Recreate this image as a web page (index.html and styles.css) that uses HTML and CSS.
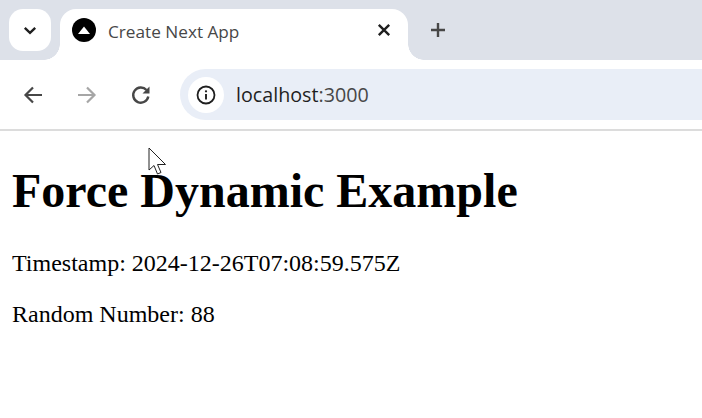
FILE: index.html
```html
<!DOCTYPE html>
<html lang="en">
<head>
<meta charset="utf-8">
<title>Create Next App</title>
<link rel="stylesheet" href="styles.css">
</head>
<body>
<header class="chrome">
  <div class="tabstrip">
    <button class="tab-search" aria-label="Search tabs">
      <svg width="14" height="9" viewBox="0 0 14 9"><path d="M1.800 1.800 7 6.800 12.200 1.800" fill="none" stroke="#1f1f1f" stroke-width="2.400"/></svg>
    </button>
    <div class="tab">
      <svg class="favicon" width="24" height="24" viewBox="0 0 24 24"><circle cx="12" cy="12" r="12" fill="#000"/><path d="M12 8.500 18 16H6Z" fill="#fff"/></svg>
      <span class="tab-title">Create Next App</span>
      <svg class="tab-close" width="14" height="14" viewBox="0 0 14 14"><path d="M1.800 1.800 12.200 12.200M12.200 1.800 1.800 12.200" fill="none" stroke="#1f1f1f" stroke-width="2.400"/></svg>
    </div>
    <svg class="new-tab" width="16" height="16" viewBox="0 0 16 16"><path d="M8 1V15M1 8H15" fill="none" stroke="#474747" stroke-width="2.400"/></svg>
  </div>
  <div class="toolbar">
    <svg class="nav" width="22" height="22" viewBox="0 0 22 22"><path d="M20 11H3.500M11 3.500 3.500 11 11 18.500" fill="none" stroke="#474747" stroke-width="2.200"/></svg>
    <svg class="nav" width="22" height="22" viewBox="0 0 22 22"><path d="M2 11H18.500M11 3.500 18.500 11 11 18.500" fill="none" stroke="#a6a6a6" stroke-width="2.200"/></svg>
    <svg class="nav" width="22" height="22" viewBox="0 0 22 22"><path d="M18.300 12.500A7.600 7.600 0 1 1 16.500 6" fill="none" stroke="#474747" stroke-width="2.400"/><path d="M19.500 2.500V9.500H12.500Z" fill="#474747"/></svg>
    <div class="omnibox">
      <span class="site-info">
        <svg width="20" height="20" viewBox="0 0 20 20"><circle cx="10" cy="10" r="8.500" fill="none" stroke="#1f1f1f" stroke-width="1.800"/><path d="M10 9V14.500" stroke="#1f1f1f" stroke-width="1.900"/><circle cx="10" cy="6.300" r="1.150" fill="#1f1f1f"/></svg>
      </span>
      <span class="url">localhost<span class="port">:3000</span></span>
    </div>
  </div>
</header>
<main class="page">
  <h1>Force Dynamic Example</h1>
  <p>Timestamp: 2024-12-26T07:08:59.575Z</p>
  <p>Random Number: 88</p>
</main>
<svg class="cursor" width="20" height="29" viewBox="0 0 20 29"><path d="M1 1V23L6 18.500 9.500 27 13 25.500 9.500 17.500H17.500Z" fill="#fff" stroke="#222" stroke-width="1"/></svg>
</body>
</html>
```
FILE: styles.css
```css
* { box-sizing: border-box; }
html, body { margin: 0; padding: 0; }
body {
  background: #fff;
  color: #000;
  font-family: "Liberation Serif", serif;
  overflow: hidden;
  height: 418px;
  position: relative;
}
.chrome { font-family: "Open Sans", sans-serif; }
.tabstrip {
  height: 60px;
  background: #dde1e9;
  display: flex;
  align-items: flex-start;
  padding: 9px 0 0 9px;
}
.tab-search {
  width: 42px;
  height: 42px;
  margin: 0;
  padding: 0;
  border: 0;
  border-radius: 14px;
  background: #fff;
  display: flex;
  align-items: center;
  justify-content: center;
}
.tab {
  width: 348px;
  height: 51px;
  margin-left: 9px;
  padding: 0 17px 9px 12px;
  background: #fff;
  border-radius: 16px 16px 0 0;
  display: flex;
  align-items: center;
  position: relative;
}
.tab::before, .tab::after {
  content: "";
  position: absolute;
  bottom: 0;
  width: 16px;
  height: 16px;
}
.tab::before { left: -16px; background: radial-gradient(circle at 0 0, transparent 15.500px, #fff 16px); }
.tab::after { right: -16px; background: radial-gradient(circle at 100% 0, transparent 15.500px, #fff 16px); }
.favicon { flex: none; }
.tab-title {
  flex: 1;
  margin: 3px 0 0 12px;
  font-size: 17.200px;
  color: #474747;
}
.tab-close { flex: none; }
.new-tab { margin: 13px 0 0 22px; }
.toolbar {
  height: 71px;
  padding: 9px 0 9px 22px;
  background: #fff;
  border-radius: 16px 0 0 0;
  border-bottom: 2px solid #dcdcdc;
  display: flex;
  align-items: center;
  gap: 32px;
}
.nav { flex: none; }
.omnibox {
  flex: 1;
  height: 51px;
  margin-left: -4px;
  padding-left: 8px;
  background: #e9eef7;
  border-radius: 26px 0 0 26px;
  display: flex;
  align-items: center;
}
.site-info {
  width: 36px;
  height: 36px;
  border-radius: 50%;
  background: #fff;
  display: flex;
  align-items: center;
  justify-content: center;
}
.url { margin-left: 12px; font-size: 19.700px; color: #1f1f1f; }
.port { color: #474747; }
.page { padding: 32px 12px 0; }
h1 { margin: 0 0 32px; font-size: 48px; font-weight: bold; line-height: 55px; }
p { margin: 0 0 24px; font-size: 24px; line-height: 27px; }
.cursor { position: absolute; left: 148px; top: 147px; }
```
